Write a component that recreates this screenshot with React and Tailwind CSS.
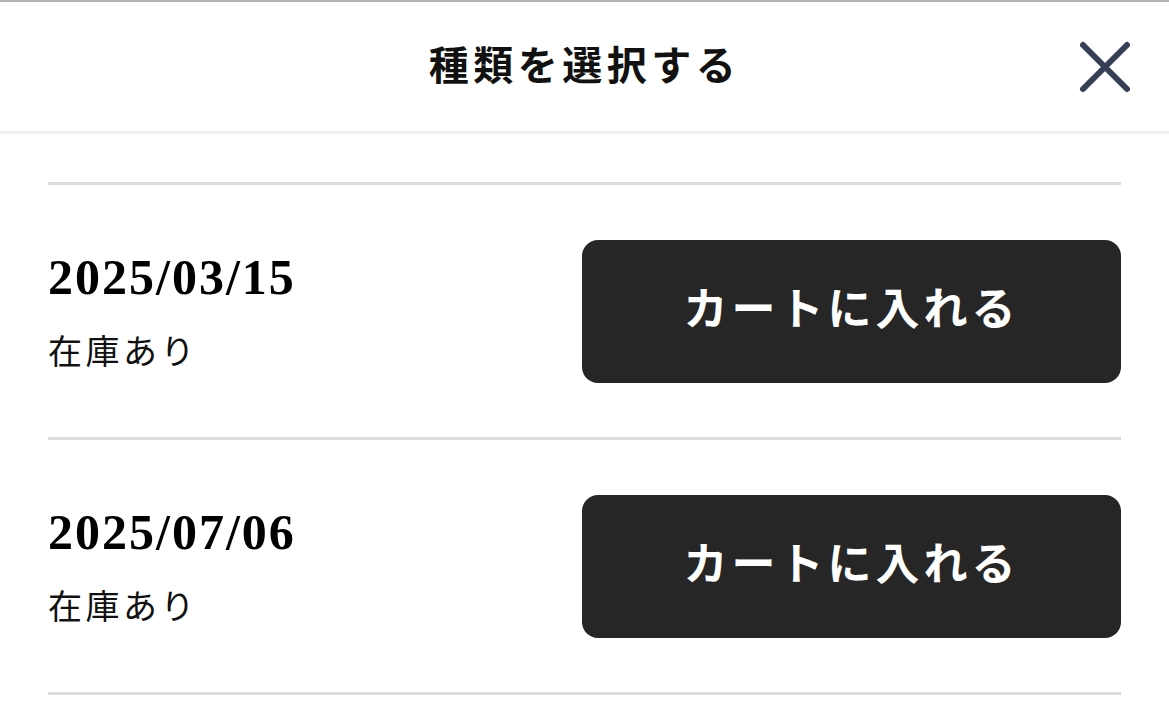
import React from "react";

const serif = { fontFamily: '"Liberation Serif", "Noto Sans CJK JP", serif' };

function Row({ date }) {
  return (
    <>
      <div className="flex h-[252px] items-center justify-between">
        <div className="flex flex-col" style={serif}>
          <div className="text-[50px] font-bold leading-[56px] tracking-[2px] text-black">{date}</div>
          <div className="mt-[28px] text-[34px] leading-[40px] tracking-[3.5px] text-[#111]">在庫あり</div>
        </div>
        <button
          className="flex h-[143px] w-[539px] items-center justify-center rounded-[16px] bg-[#262626] text-[44px] font-bold tracking-[4px] text-white"
          style={serif}
        >
          カートに入れる
        </button>
      </div>
      <div className="h-[3px] bg-[#dcdcdc]" />
    </>
  );
}

export default function App() {
  return (
    <div className="min-h-[705px] w-full bg-white border-t-2 border-[#b3b3b3]">
      <header className="grid h-[132px] grid-cols-[1fr_auto_1fr] items-center border-b-[3px] border-[#f0f0f0]">
        <div />
        <h1 className="text-[40px] font-bold tracking-[4.5px] text-[#111]" style={serif}>
          種類を選択する
        </h1>
        <div className="flex justify-end pr-[37px]">
          <button aria-label="閉じる" className="flex h-[56px] w-[56px] items-center justify-center">
            <svg width="56" height="56" viewBox="0 0 56 56" fill="none">
              <path d="M7 6 L51 50 M51 6 L7 50" stroke="#363f55" strokeWidth="6" strokeLinecap="round" />
            </svg>
          </button>
        </div>
      </header>
      <main className="px-[48px] pt-[48px]">
        <div className="h-[3px] bg-[#dcdcdc]" />
        <Row date="2025/03/15" />
        <Row date="2025/07/06" />
      </main>
    </div>
  );
}
